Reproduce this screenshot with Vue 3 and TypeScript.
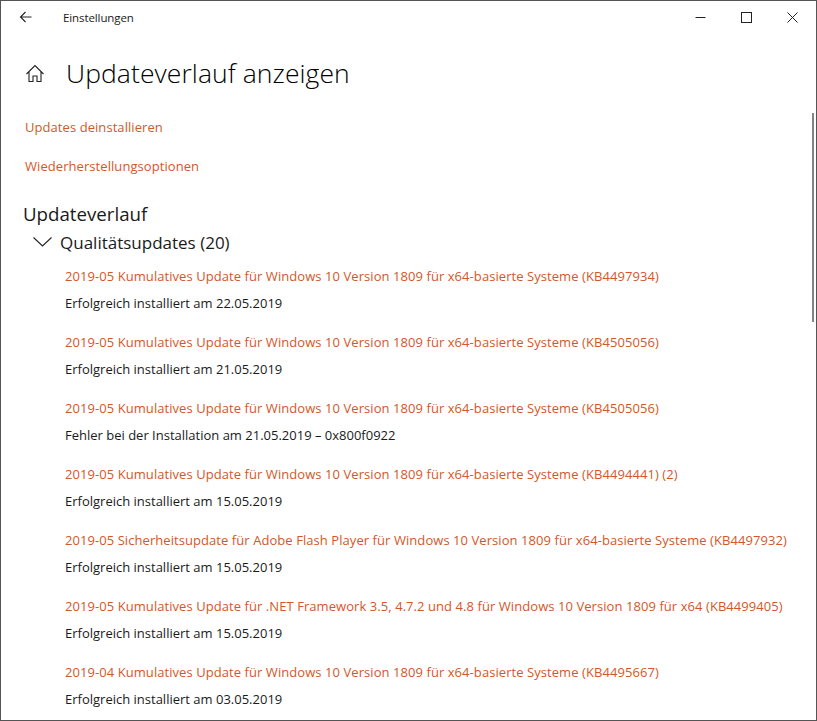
<template>
  <div class="window">
    <header class="titlebar">
      <svg class="back" width="14" height="12" viewBox="0 0 14 12" fill="none" stroke="#222" stroke-width="1.1">
        <path d="M12.500 6H1.500M6.500 1 1.500 6l5 5" />
      </svg>
      <span class="app-name">Einstellungen</span>
      <div class="controls">
        <svg width="11" height="11" viewBox="0 0 11 11" fill="none" stroke="#222"><path d="M0.500 5.500h10" /></svg>
        <svg width="11" height="11" viewBox="0 0 11 11" fill="none" stroke="#222"><rect x="0.500" y="0.500" width="10" height="10" /></svg>
        <svg width="11" height="11" viewBox="0 0 11 11" fill="none" stroke="#222"><path d="M0.500 0.500l10 10M10.500 0.500l-10 10" /></svg>
      </div>
    </header>

    <main class="content">
      <div class="page-head">
        <svg class="home" width="18" height="19" viewBox="0 0 18 19" fill="none" stroke="#222" stroke-width="1.100">
          <path d="M0.500 10 9 1.500l8.500 8.500M3 7.500V17.500H7V12h4v5.500h4V7.500" />
        </svg>
        <h1>Updateverlauf anzeigen</h1>
      </div>

      <a class="top-link">Updates deinstallieren</a>
      <a class="top-link">Wiederherstellungsoptionen</a>

      <h2>Updateverlauf</h2>
      <div class="group-head">
        <svg width="19" height="10" viewBox="0 0 19 10" fill="none" stroke="#222" stroke-width="1.100">
          <path d="M0.500 0.500 9.500 9l9-8.500" />
        </svg>
        <h3>Qualitätsupdates (20)</h3>
      </div>

      <ul class="updates">
        <li v-for="item in updates" :key="item.title + item.status">
          <a class="update-link">{{ item.title }}</a>
          <p class="status">{{ item.status }}</p>
        </li>
      </ul>
    </main>

    <div class="scrollbar"></div>
  </div>
</template>

<script setup lang="ts">
interface UpdateItem {
  title: string
  status: string
}

const updates: UpdateItem[] = [
  {
    title: '2019-05 Kumulatives Update für Windows 10 Version 1809 für x64-basierte Systeme (KB4497934)',
    status: 'Erfolgreich installiert am 22.05.2019',
  },
  {
    title: '2019-05 Kumulatives Update für Windows 10 Version 1809 für x64-basierte Systeme (KB4505056)',
    status: 'Erfolgreich installiert am 21.05.2019',
  },
  {
    title: '2019-05 Kumulatives Update für Windows 10 Version 1809 für x64-basierte Systeme (KB4505056)',
    status: 'Fehler bei der Installation am 21.05.2019 – 0x800f0922',
  },
  {
    title: '2019-05 Kumulatives Update für Windows 10 Version 1809 für x64-basierte Systeme (KB4494441) (2)',
    status: 'Erfolgreich installiert am 15.05.2019',
  },
  {
    title: '2019-05 Sicherheitsupdate für Adobe Flash Player für Windows 10 Version 1809 für x64-basierte Systeme (KB4497932)',
    status: 'Erfolgreich installiert am 15.05.2019',
  },
  {
    title: '2019-05 Kumulatives Update für .NET Framework 3.5, 4.7.2 und 4.8 für Windows 10 Version 1809 für x64 (KB4499405)',
    status: 'Erfolgreich installiert am 15.05.2019',
  },
  {
    title: '2019-04 Kumulatives Update für Windows 10 Version 1809 für x64-basierte Systeme (KB4495667)',
    status: 'Erfolgreich installiert am 03.05.2019',
  },
]
</script>

<style>
html,
body {
  margin: 0;
  background: #fff;
}
</style>

<style scoped>
.window {
  position: relative;
  box-sizing: border-box;
  width: 817px;
  height: 721px;
  overflow: hidden;
  background: #fff;
  border: 1px solid #555;
  font-family: "Open Sans", "Noto Sans", sans-serif;
  color: #1a1a1a;
}

.titlebar {
  display: flex;
  align-items: center;
  height: 32px;
  padding-left: 18px;
}

.back {
  margin-right: 30px;
}

.app-name {
  font-size: 11.500px;
  letter-spacing: -0.100px;
}

.controls {
  margin-left: auto;
  display: flex;
  gap: 35px;
  margin-right: 18px;
}

.content {
  padding: 0 0 0 24px;
}

.page-head {
  display: flex;
  align-items: center;
  gap: 22px;
  margin-top: 17px;
  height: 46px;
  margin-left: 1px;
}

h1 {
  margin: 0;
  font-size: 26.500px;
  font-weight: 300;
  letter-spacing: 0.080px;
  color: #000;
}

.top-link {
  display: block;
  color: #d4572a;
  font-size: 13px;
  line-height: 20px;
  letter-spacing: 0.065px;
}

.page-head + .top-link {
  margin-top: 21px;
}

.top-link + .top-link {
  margin-top: 19px;
}

h2 {
  margin: 25px 0 0 -2px;
  font-size: 18.700px;
  line-height: 26px;
  font-weight: 400;
}

.group-head {
  display: flex;
  align-items: center;
  gap: 8px;
  margin: 2px 0 0 8px;
  height: 26px;
}

h3 {
  margin: 0;
  font-size: 17px;
  font-weight: 400;
}

.updates {
  list-style: none;
  margin: 11px 0 0;
  padding: 0 0 0 40px;
}

.updates li {
  height: 66px;
}

.update-link {
  display: block;
  color: #d4572a;
  font-size: 13px;
  line-height: 20px;
  letter-spacing: 0.065px;
  white-space: nowrap;
}

.status {
  margin: 7px 0 0;
  font-size: 13px;
  line-height: 20px;
  white-space: nowrap;
}

.scrollbar {
  position: absolute;
  right: 2px;
  top: 112px;
  width: 2px;
  height: 209px;
  background: #858585;
}
</style>
